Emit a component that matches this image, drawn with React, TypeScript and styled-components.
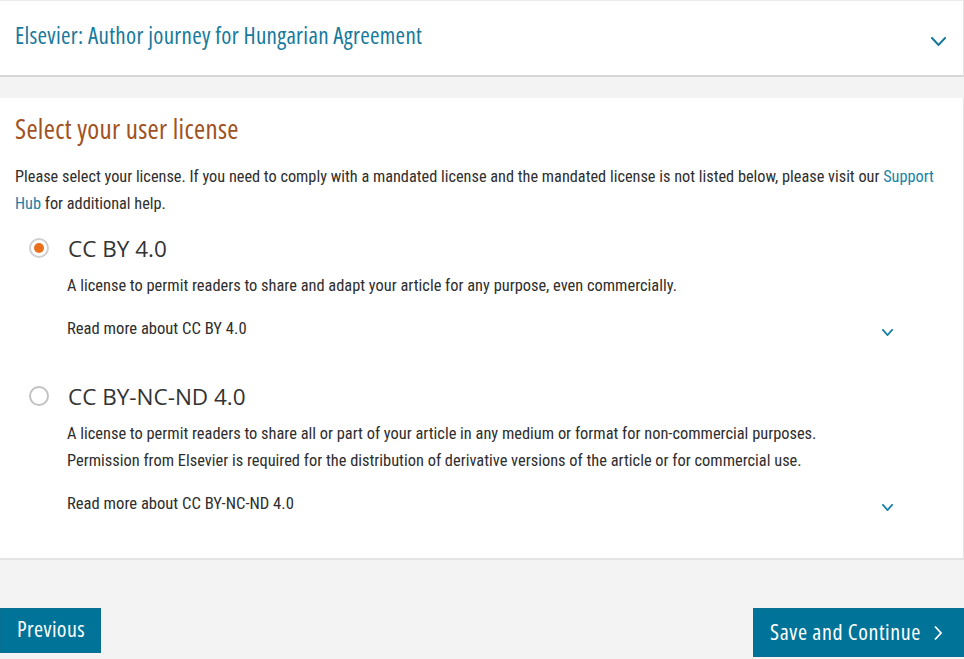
import React from "react";
import styled, { createGlobalStyle } from "styled-components";

const textFont = `"Roboto Condensed", "Open Sans", "Liberation Sans", sans-serif`;
const displayFont = `"Open Sans", "Liberation Sans", sans-serif`;

const GlobalStyle = createGlobalStyle`
  html, body {
    margin: 0;
    padding: 0;
    background: #f3f3f3;
  }
  body {
    font-family: ${textFont};
    color: #2e2e2e;
  }
  * { box-sizing: border-box; }
`;

const Page = styled.div`
  min-height: 659px;
  background: #f3f3f3;
  display: flex;
  flex-direction: column;
`;

const JourneyBar = styled.header`
  height: 77px;
  background: #fff;
  border-top: 1px solid #ebebeb;
  border-right: 1px solid #e2e2e2;
  border-bottom: 2px solid #d7d7d7;
  display: flex;
  align-items: center;
  justify-content: space-between;
  padding: 0 17px 0 15px;
`;

const JourneyTitle = styled.h1`
  margin: -7px 0 0;
  font-family: ${displayFont};
  font-stretch: 75%;
  font-size: 23px;
  letter-spacing: 0.3px;
  font-weight: 400;
  line-height: 30px;
  color: #17799c;
`;

const ChevronWrap = styled.span<{ $top?: number }>`
  display: inline-flex;
  margin-top: ${(p) => p.$top ?? 0}px;
`;

const LicenseCard = styled.section`
  margin-top: 21px;
  background: #fff;
  border-right: 1px solid #e2e2e2;
  box-shadow: 0 2px 0 #e3e3e3;
  padding: 16px 15px 41px 15px;
`;

const Heading = styled.h2`
  margin: 0;
  font-family: ${displayFont};
  font-stretch: 75%;
  font-size: 27px;
  letter-spacing: 0.3px;
  font-weight: 400;
  line-height: 30px;
  color: #a0521f;
`;

const Intro = styled.p`
  margin: 19px 0 0;
  font-size: 16.3px;
  line-height: 27px;
`;

const Link = styled.a`
  color: #1a82a8;
  text-decoration: none;
`;

const Option = styled.div<{ $gap: number }>`
  margin-top: ${(p) => p.$gap}px;
  display: grid;
  grid-template-columns: 38px 1fr;
  padding-left: 14px;
  padding-right: 55px;
`;

const Radio = styled.span<{ $checked?: boolean }>`
  width: 20px;
  height: 20px;
  margin-top: 4px;
  border-radius: 50%;
  border: 2px solid ${(p) => (p.$checked ? "#cfcfcf" : "#c2c2c2")};
  background: #fff;
  display: flex;
  align-items: center;
  justify-content: center;
  &::after {
    content: "";
    width: 10px;
    height: 10px;
    border-radius: 50%;
    background: ${(p) => (p.$checked ? "#ea6f1b" : "transparent")};
  }
`;

const OptionBody = styled.div`
  display: flex;
  flex-direction: column;
`;

const OptionTitle = styled.div`
  font-family: ${displayFont};
  font-size: 22.5px;
  line-height: 30px;
  color: #333;
  margin-left: 1px;
`;

const OptionDesc = styled.p`
  margin: 8px 0 0;
  font-size: 16.4px;
  line-height: 27px;
`;

const ReadMore = styled.div`
  margin-top: 16px;
  display: flex;
  align-items: center;
  justify-content: space-between;
  font-size: 16.6px;
  line-height: 27px;
`;

const Actions = styled.div`
  margin-top: 50px;
  display: flex;
  justify-content: space-between;
  align-items: flex-start;
`;

const Button = styled.button<{ $tall?: boolean }>`
  font-family: ${displayFont};
  font-stretch: 75%;
  background: #007399;
  color: #fff;
  border: 1px solid #0b6f91;
  font-size: 22px;
  letter-spacing: ${(p) => (p.$tall ? 0.6 : 0.4)}px;
  height: ${(p) => (p.$tall ? 49 : 45)}px;
  padding: 0 ${(p) => (p.$tall ? 20 : 15)}px 0 16px;
  display: inline-flex;
  align-items: center;
  gap: 12px;
  cursor: pointer;
`;

const ButtonText = styled.span<{ $shift?: number }>`
  margin-top: ${(p) => p.$shift ?? 0}px;
`;

function Chevron({ w, h, color, sw }: { w: number; h: number; color: string; sw: number }) {
  return (
    <svg width={w} height={h} viewBox={`0 0 ${w} ${h}`} fill="none">
      <polyline
        points={`${sw / 2},${sw / 2} ${w / 2},${h - sw / 2} ${w - sw / 2},${sw / 2}`}
        stroke={color}
        strokeWidth={sw}
        strokeLinecap="square"
        strokeLinejoin="miter"
      />
    </svg>
  );
}

function ChevronRight() {
  return (
    <svg width="10" height="16" viewBox="0 0 10 16" fill="none">
      <polyline points="2,1.5 8,8 2,14.5" stroke="#fff" strokeWidth="1.8" />
    </svg>
  );
}

const options = [
  {
    id: "by",
    title: "CC BY 4.0",
    desc: ["A license to permit readers to share and adapt your article for any purpose, even commercially."],
    checked: true,
    gap: 17,
  },
  {
    id: "byncnd",
    title: "CC BY-NC-ND 4.0",
    desc: [
      "A license to permit readers to share all or part of your article in any medium or format for non-commercial purposes.",
      "Permission from Elsevier is required for the distribution of derivative versions of the article or for commercial use.",
    ],
    checked: false,
    gap: 40,
  },
];

export default function App() {
  return (
    <>
      <GlobalStyle />
      <Page>
        <JourneyBar>
          <JourneyTitle>Elsevier: Author journey for Hungarian Agreement</JourneyTitle>
          <ChevronWrap $top={6}>
            <Chevron w={15} h={9} color="#17799c" sw={2} />
          </ChevronWrap>
        </JourneyBar>

        <LicenseCard>
          <Heading>Select your user license</Heading>
          <Intro>
            Please select your license. If you need to comply with a mandated license and the mandated license is not
            listed below, please visit our <Link href="#">Support Hub</Link> for additional help.
          </Intro>

          {options.map((o) => (
            <Option key={o.id} $gap={o.gap}>
              <Radio $checked={o.checked} />
              <OptionBody>
                <OptionTitle>{o.title}</OptionTitle>
                <OptionDesc>
                  {o.desc.map((d, i) => (
                    <React.Fragment key={i}>
                      {i > 0 && <br />}
                      {d}
                    </React.Fragment>
                  ))}
                </OptionDesc>
                <ReadMore>
                  <span>Read more about {o.title}</span>
                  <ChevronWrap $top={8}>
                    <Chevron w={11} h={7} color="#1a82a8" sw={1.8} />
                  </ChevronWrap>
                </ReadMore>
              </OptionBody>
            </Option>
          ))}
        </LicenseCard>

        <Actions>
          <Button>
            <ButtonText $shift={-6}>Previous</ButtonText>
          </Button>
          <Button $tall>
            <ButtonText $shift={-3}>Save and Continue</ButtonText>
            <ChevronRight />
          </Button>
        </Actions>
      </Page>
    </>
  );
}
